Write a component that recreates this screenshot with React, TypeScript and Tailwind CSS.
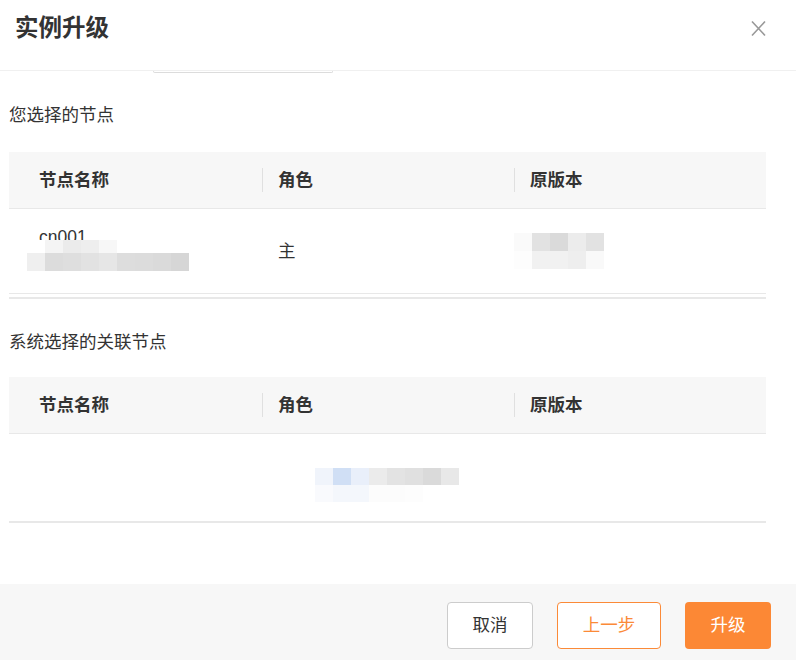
import React from 'react';

// 马赛克遮挡块（截图里被打码的内容）
type Mosaic = { cols: string[][]; cell: number; rowH: number[] };

const nameMosaic: Mosaic = {
    cell: 18,
    rowH: [13, 18],
    cols: [
        ['#ffffff', '#f4f4f4', '#ebebeb', '#eeeeee', '#f7f7f7', '#ffffff', '#ffffff', '#ffffff', '#ffffff'],
        ['#efefef', '#dcdcdc', '#dedede', '#e2e2e2', '#e6e6e6', '#dddddd', '#dcdcdc', '#dadada', '#d6d6d6'],
    ],
};

const versionMosaic: Mosaic = {
    cell: 18,
    rowH: [18, 18],
    cols: [
        ['#fafafa', '#e2e2e2', '#dadada', '#ececec', '#e2e2e2'],
        ['#fdfdfd', '#f1f1f1', '#f1f1f1', '#eeeeee', '#f9f9f9'],
    ],
};

const relMosaic: Mosaic = {
    cell: 18,
    rowH: [17, 17],
    cols: [
        ['#f0f4fb', '#d0dff5', '#e9effa', '#ebebeb', '#e3e3e3', '#e0e0e0', '#dadada', '#e8e8e8'],
        ['#f9fafd', '#f4f7fc', '#f4f7fc', '#fcfcfc', '#fcfcfc', '#fdfdfd', '#ffffff', '#ffffff'],
    ],
};

const MosaicBlock = ({ m }: { m: Mosaic }) => (
    <div className="flex flex-col">
        {m.cols.map((row, i) => (
            <div className="flex" key={i}>
                {row.map((c, j) => (
                    <div key={j} style={{ width: m.cell, height: m.rowH[i], background: c }} />
                ))}
            </div>
        ))}
    </div>
);

const TableHead = () => (
    <div className="grid grid-cols-[253px_252px_252px] h-[57px] bg-[#f7f7f7] border-b border-[#e8e8e8] items-center font-bold text-[#333] text-[17.5px]">
        <div className="pl-[30px]">节点名称</div>
        <div className="flex items-center">
            <span className="w-px h-6 bg-[#e0e0e0]" />
            <span className="pl-[15px]">角色</span>
        </div>
        <div className="flex items-center">
            <span className="w-px h-6 bg-[#e0e0e0]" />
            <span className="pl-[15px]">原版本</span>
        </div>
    </div>
);

export default function App() {
    return (
        <div
            className="w-[796px] h-[660px] bg-white flex flex-col text-[#333] overflow-hidden"
            style={{ fontFamily: '"Liberation Sans", "Noto Sans CJK SC", sans-serif' }}
        >
            {/* 标题栏 */}
            <div className="h-[71px] shrink-0 flex items-start justify-between border-b border-[#f0f0f0] pl-[15px] pr-[30px]">
                <h1 className="mt-[12px] text-[23.5px] leading-[32px] font-bold text-[#333]">实例升级</h1>
                <svg className="mt-[20px]" width="15" height="17" viewBox="0 0 15 17">
                    <path d="M1 1.5 L14 15.5 M14 1.5 L1 15.5" stroke="#999" strokeWidth="1.6" fill="none" />
                </svg>
            </div>

            <div className="flex-1 pl-[9px] pr-[30px]">
                <div className="ml-[144px] w-[180px] h-[2px] border-b border-x border-[#dcdcdc] rounded-b-[3px]" />

                <div className="mt-[30px] text-[17.5px] leading-[24px]">您选择的节点</div>

                <div className="mt-[25px]">
                    <TableHead />
                    <div className="grid grid-cols-[253px_252px_252px] h-[85px] border-b border-[#e8e8e8] items-center text-[17.5px]">
                        <div className="relative h-full">
                            <div className="absolute left-[30px] top-[18px] leading-[20px]">cn001</div>
                            <div className="absolute left-[18px] top-[31px]">
                                <MosaicBlock m={nameMosaic} />
                            </div>
                        </div>
                        <div className="pl-[16px] pt-[1px]">主</div>
                        <div className="pl-[0px]">
                            <MosaicBlock m={versionMosaic} />
                        </div>
                    </div>
                    <div className="mt-[3px] h-[2px] bg-[#e8e8e8]" />
                </div>

                <div className="mt-[31px] text-[17.5px] leading-[24px]">系统选择的关联节点</div>

                <div className="mt-[23px]">
                    <TableHead />
                    <div className="h-[89px] border-b-2 border-[#e8e8e8] flex items-start">
                        <div className="ml-[306px] mt-[34px]">
                            <MosaicBlock m={relMosaic} />
                        </div>
                    </div>
                </div>
            </div>

            {/* 底部按钮 */}
            <div className="h-[76px] shrink-0 bg-[#f7f7f7] flex items-start justify-end gap-[24px] pt-[18px] pr-[25px] text-[17.5px]">
                <button className="w-[86px] h-[47px] rounded-[4px] border border-[#cccccc] bg-white text-[#333]">取消</button>
                <button className="w-[104px] h-[47px] rounded-[4px] border border-[#fb8a38] bg-white text-[#fb8a38]">上一步</button>
                <button className="w-[86px] h-[47px] rounded-[4px] bg-[#fc8835] text-white">升级</button>
            </div>
        </div>
    );
}
